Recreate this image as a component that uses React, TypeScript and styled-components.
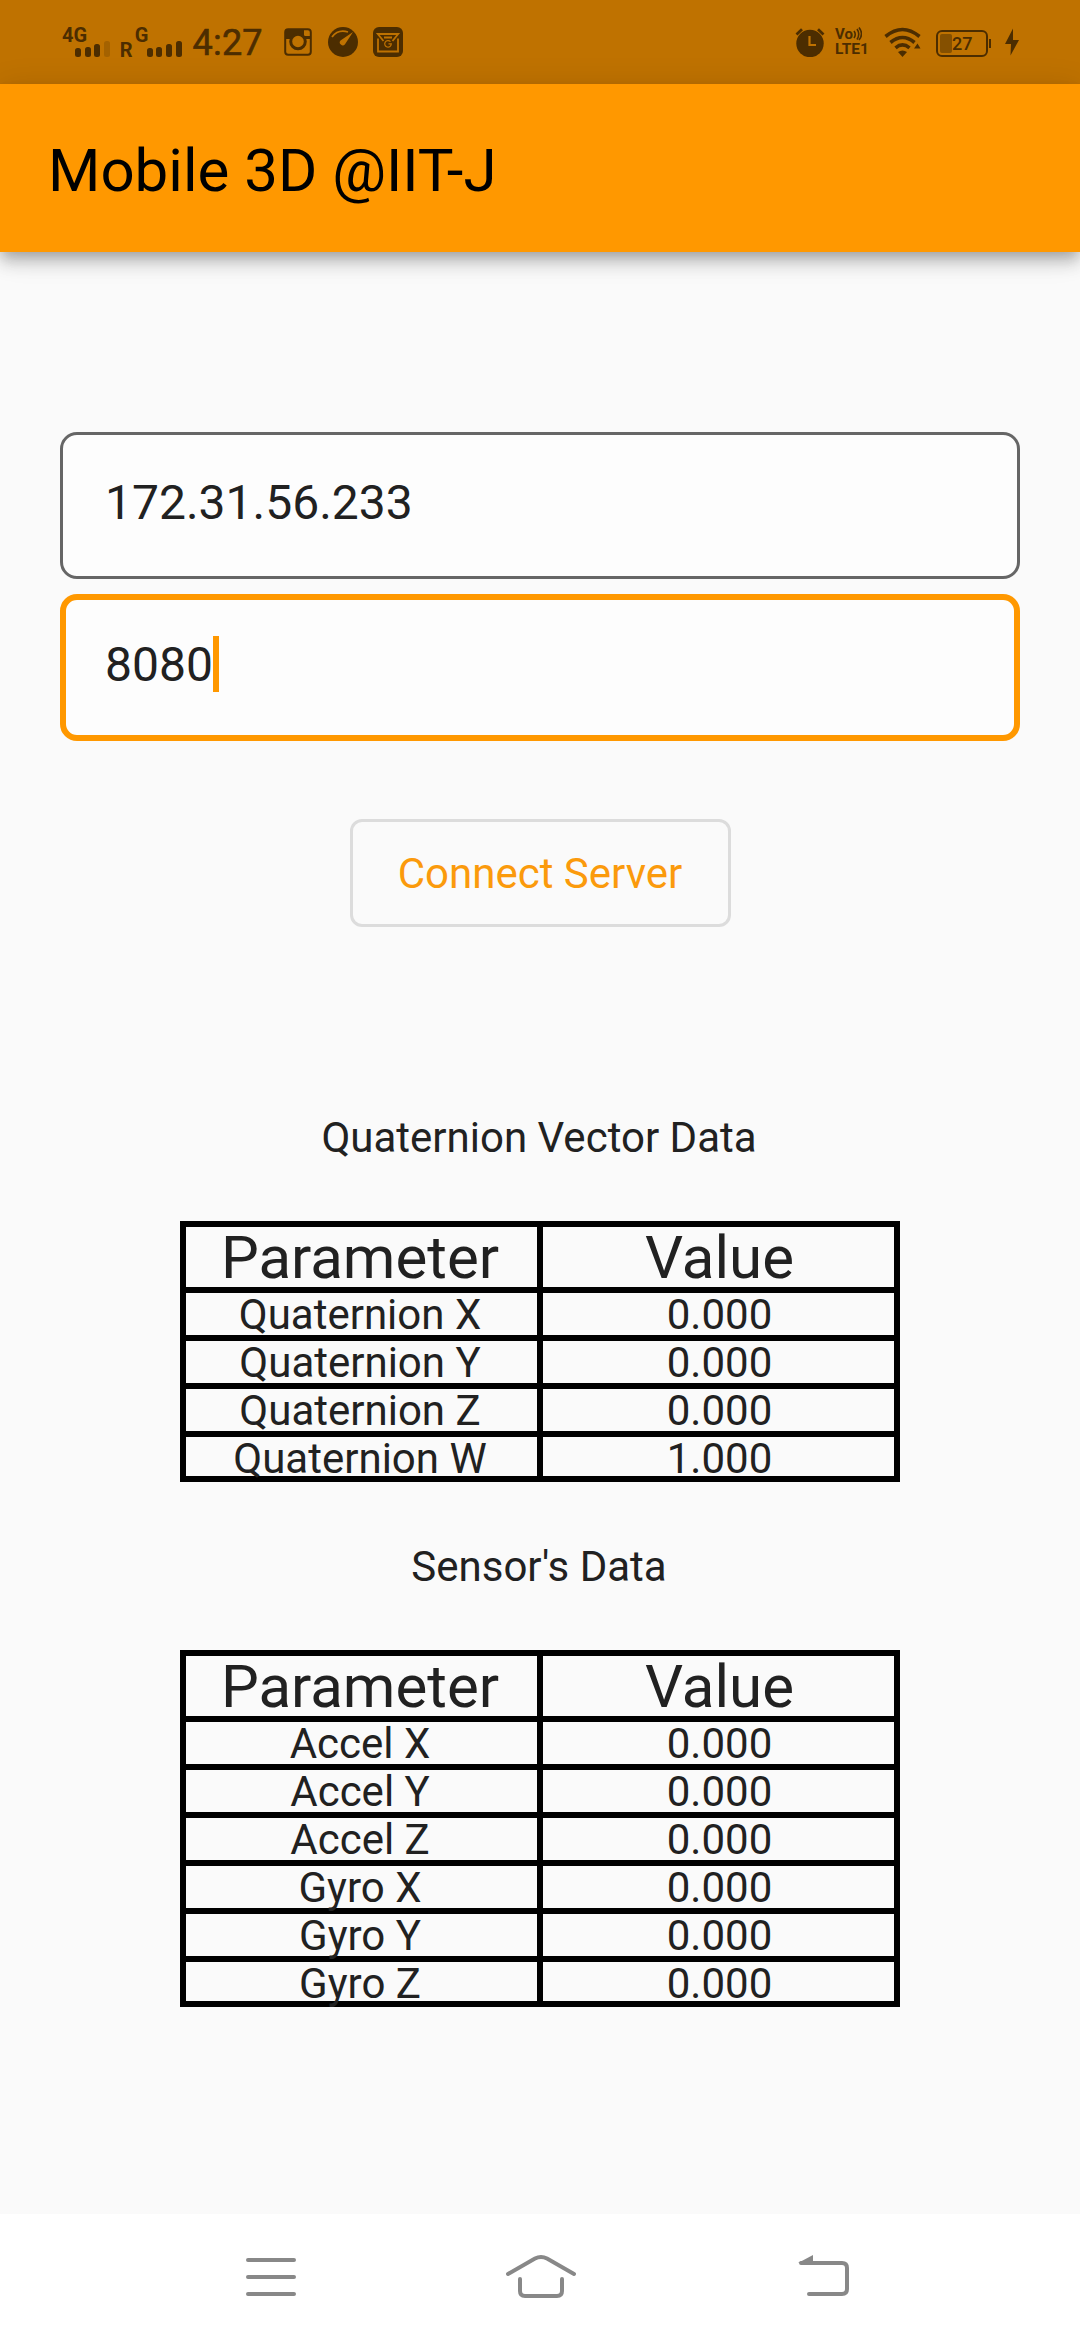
import React from "react";
import styled, { createGlobalStyle } from "styled-components";

const INK = "#4c2d00";
const ACCENT = "#ff9800";

const GlobalStyle = createGlobalStyle`
  * { box-sizing: border-box; }
  body { margin: 0; background: #fafafa; }
`;

const Screen = styled.div`
  display: flex;
  flex-direction: column;
  width: 1080px;
  height: 2340px;
  background: #fafafa;
  color: #212121;
  font-family: Roboto, "Liberation Sans", sans-serif;
  overflow: hidden;
`;

const StatusBar = styled.header`
  display: flex;
  flex: none;
  justify-content: space-between;
  height: 84px;
  padding: 27px 60px 0 62px;
  background: #bf7200;
  color: ${INK};
`;

const StatusGroup = styled.div`
  display: flex;
  align-items: flex-start;
  height: 30px;
`;

const Glyph = styled.svg<{ $ml?: number }>`
  display: block;
  flex: none;
  margin-left: ${(p) => p.$ml ?? 0}px;
`;

const NetLabel = styled.span<{ $ml?: number; $mt?: number; $w: number }>`
  width: ${(p) => p.$w}px;
  margin-left: ${(p) => p.$ml ?? 0}px;
  margin-top: ${(p) => p.$mt ?? 0}px;
  font-size: 20px;
  font-weight: 700;
  line-height: 16px;
  white-space: nowrap;
`;

const Bars = styled.div<{ $ml: number }>`
  display: flex;
  align-items: flex-end;
  gap: 3.6px;
  height: 30px;
  margin-left: ${(p) => p.$ml}px;
`;

const Bar = styled.i<{ $h: number; $off?: boolean }>`
  width: 6px;
  height: ${(p) => p.$h}px;
  border-radius: 2.5px;
  background: ${(p) => (p.$off ? "#a46200" : INK)};
`;

const Clock = styled.time`
  width: 69px;
  margin-left: 11px;
  font-size: 36px;
  font-weight: 400;
  line-height: 33px;
  letter-spacing: 0.2px;
  white-space: nowrap;
  -webkit-text-stroke: 0.6px ${INK};
`;

const Volte = styled.div`
  display: flex;
  flex-direction: column;
  width: 34px;
  margin-left: 10px;
  font-weight: 700;
  font-size: 15.5px;
  line-height: 15px;
`;

const VoLine = styled.div`
  display: flex;
  font-size: 15px;
  height: 15px;
`;

const Battery = styled.div`
  display: flex;
  align-items: center;
  width: 52px;
  height: 27px;
  margin: 3px 0 0 15px;
  padding-left: 2px;
  border: 2.5px solid ${INK};
  border-radius: 6px;
  font-size: 18px;
  font-weight: 500;
  line-height: 20px;
`;

const Charge = styled.i`
  width: 12px;
  height: 19px;
  border-radius: 2px;
  background: #855000;
`;

const BatteryCap = styled.i`
  width: 2px;
  height: 9px;
  margin: 12px 0 0 1px;
  background: ${INK};
`;

const AppBar = styled.div`
  flex: none;
  height: 168px;
  padding: 52px 48px 0;
  background: ${ACCENT};
  box-shadow: 0 6px 12px -3px rgba(0, 0, 0, 0.2), 0 12px 15px rgba(0, 0, 0, 0.14), 0 3px 30px rgba(0, 0, 0, 0.12);
`;

const Title = styled.h1`
  margin: 0;
  color: #000;
  font-size: 60px;
  font-weight: 400;
  line-height: 70px;
`;

const Content = styled.main`
  display: flex;
  flex: 1;
  flex-direction: column;
  align-items: center;
  padding-top: 180px;
`;

const Fields = styled.div`
  display: flex;
  flex-direction: column;
  gap: 15px;
  width: 960px;
`;

const Field = styled.div<{ $focused?: boolean }>`
  display: flex;
  align-items: flex-start;
  height: 147px;
  padding: ${(p) => (p.$focused ? "36px 39px" : "39px 42px")};
  border: ${(p) => (p.$focused ? `6px solid ${ACCENT}` : "3px solid #666")};
  border-radius: 17px;
  background: #fdfdfd;
  font-size: 48px;
  line-height: 58px;
`;

const Caret = styled.i`
  width: 6px;
  height: 56px;
  background: ${ACCENT};
`;

const ConnectButton = styled.button`
  width: 381px;
  height: 108px;
  margin: 78px 0 0;
  padding: 0;
  border: 3px solid #dcdcdc;
  border-radius: 12px;
  background: transparent;
  color: #fb9a0c;
  font-family: inherit;
  font-size: 42px;
  line-height: 49px;
`;

const Heading = styled.h2<{ $mt: number }>`
  margin: ${(p) => p.$mt}px 0 59px;
  padding-right: 2px;
  font-size: 42px;
  font-weight: 400;
  line-height: 49px;
`;

const Table = styled.div<{ $rows: number }>`
  display: grid;
  grid-template-columns: 351px 351px;
  grid-template-rows: 60px repeat(${(p) => p.$rows - 1}, 42px) 39px;
  gap: 6px;
  padding: 6px;
  background: #000;
`;

const Cell = styled.div<{ $head?: boolean }>`
  min-height: 0;
  background: #fafafa;
  font-size: ${(p) => (p.$head ? 60 : 42)}px;
  line-height: ${(p) => (p.$head ? 61 : 43)}px;
  text-align: center;

  &:nth-child(odd) {
    padding-right: 3px;
  }

  &:nth-child(even) {
    padding-left: 2px;
  }
`;

const NavBar = styled.nav`
  display: flex;
  flex: none;
  align-items: flex-start;
  height: 126px;
  padding: 36px 0 0 244px;
  background: #fff;
`;

type Row = [string, string];

const quaternion: Row[] = [
  ["Quaternion X", "0.000"],
  ["Quaternion Y", "0.000"],
  ["Quaternion Z", "0.000"],
  ["Quaternion W", "1.000"],
];

const sensors: Row[] = [
  ["Accel X", "0.000"],
  ["Accel Y", "0.000"],
  ["Accel Z", "0.000"],
  ["Gyro X", "0.000"],
  ["Gyro Y", "0.000"],
  ["Gyro Z", "0.000"],
];

function DataTable({ rows }: { rows: Row[] }) {
  return (
    <Table $rows={rows.length}>
      <Cell $head>Parameter</Cell>
      <Cell $head>Value</Cell>
      {rows.map(([name, value]) => (
        <React.Fragment key={name}>
          <Cell>{name}</Cell>
          <Cell>{value}</Cell>
        </React.Fragment>
      ))}
    </Table>
  );
}

function CameraIcon() {
  return (
    <Glyph $ml={21} width="30" height="30" viewBox="0 0 30 30" fill="none">
      <rect x="2.2" y="2.2" width="25.6" height="25.6" rx="3" stroke={INK} strokeWidth="2" />
      <path d="M2 12V4.500Q2 2 4.500 2H21V9H27V12H22A8 8 0 0 0 8 12Z" fill={INK} />
      <circle cx="15" cy="14.500" r="7.300" stroke={INK} strokeWidth="3" />
    </Glyph>
  );
}

function GaugeIcon() {
  return (
    <Glyph $ml={15} width="30" height="30" viewBox="0 0 30 30" fill="none">
      <circle cx="15" cy="15" r="15" fill={INK} />
      <path d="M4 10Q10 2 20 5" stroke="#bf7200" strokeWidth="1.800" />
      <path d="M25 5L12.500 13.500A2.800 2.800 0 1 0 17 17.200Z" fill="#bf7200" />
    </Glyph>
  );
}

function MailIcon() {
  return (
    <Glyph $ml={15} width="30" height="30" viewBox="0 0 30 30" fill="none">
      <rect width="30" height="30" rx="6" fill={INK} />
      <path
        d="M10.500 14L4.800 7H25.200L19.500 14M5 11.500V24.500H25V11.500M11 10.500H19"
        stroke="#bf7200"
        strokeWidth="1.800"
      />
      <path d="M17.500 14.700A3.300 3.300 0 1 0 18.300 16.800H15.500" stroke="#bf7200" strokeWidth="1.200" />
    </Glyph>
  );
}

function AlarmIcon() {
  return (
    <Glyph width="30" height="30" viewBox="0 0 30 30" fill="none">
      <circle cx="15" cy="16.500" r="13.700" fill={INK} />
      <path d="M1.500 7.500L7 2.300M28.500 7.500L23 2.300" stroke={INK} strokeWidth="2.800" />
      <path d="M14.500 9V18H21" stroke="#bf7200" strokeWidth="2.200" />
    </Glyph>
  );
}

function WifiIcon() {
  return (
    <Glyph $ml={15} width="37" height="30" viewBox="0 0 37 30" fill="none">
      <g stroke={INK} strokeWidth="3.600">
        <path d="M1.500 9.500Q18.500 -4.500 35.500 9.500" />
        <path d="M6.500 15.500Q18.500 5.500 30.500 15.500" />
        <path d="M11.500 20.800Q18.500 15 25.500 20.800" />
      </g>
      <path d="M14 25Q18.500 21.800 23 25L18.500 30Z" fill={INK} />
      <path d="M30 21.500H36.500L33.500 16.500Z" fill={INK} />
    </Glyph>
  );
}

export default function App() {
  return (
    <Screen>
      <GlobalStyle />
      <StatusBar>
        <StatusGroup>
          <NetLabel $w={24}>4G</NetLabel>
          <Bars $ml={-11}>
            <Bar $h={9} />
            <Bar $h={10} />
            <Bar $h={13} />
            <Bar $h={16} $off />
          </Bars>
          <NetLabel $w={12} $ml={10} $mt={15}>R</NetLabel>
          <NetLabel $w={13} $ml={3}>G</NetLabel>
          <Bars $ml={-1}>
            <Bar $h={9} />
            <Bar $h={10} />
            <Bar $h={13} />
            <Bar $h={16} />
          </Bars>
          <Clock>4:27</Clock>
          <CameraIcon />
          <GaugeIcon />
          <MailIcon />
        </StatusGroup>
        <StatusGroup>
          <AlarmIcon />
          <Volte>
            <VoLine>
              Vo
              <svg width="9" height="14" viewBox="0 0 9 14" fill="none" stroke={INK} strokeWidth="1.6">
                <path d="M1 4Q3.500 7.500 1 11M4 2Q7.500 7 4 12.500M6 .5Q11 7 6 13" />
              </svg>
            </VoLine>
            <span>LTE1</span>
          </Volte>
          <WifiIcon />
          <Battery>
            <Charge />
            27
          </Battery>
          <BatteryCap />
          <Glyph $ml={13} width="16" height="30" viewBox="0 0 16 30">
            <path d="M9 1.500L1 17H7L6.500 28.500L15 13H9Z" fill={INK} />
          </Glyph>
        </StatusGroup>
      </StatusBar>

      <AppBar>
        <Title>Mobile 3D @IIT-J</Title>
      </AppBar>

      <Content>
        <Fields>
          <Field>172.31.56.233</Field>
          <Field $focused>
            8080
            <Caret />
          </Field>
        </Fields>
        <ConnectButton>Connect Server</ConnectButton>
        <Heading $mt={186}>Quaternion Vector Data</Heading>
        <DataTable rows={quaternion} />
        <Heading $mt={60}>Sensor's Data</Heading>
        <DataTable rows={sensors} />
      </Content>

      <NavBar>
        <Glyph width="54" height="54" viewBox="0 0 54 54" stroke="#888" strokeWidth="4" strokeLinecap="round">
          <path d="M4 10H50M4 27H50M4 44H50" />
        </Glyph>
        <Glyph $ml={206} width="74" height="54" viewBox="0 0 74 54" fill="none" stroke="#888" strokeWidth="4" strokeLinecap="round">
          <path d="M4 24L31 8.500Q37 5.300 43 8.500L70 24M16 29V41Q16 46 21 46H53Q58 46 58 41V29" />
        </Glyph>
        <Glyph $ml={218} width="54" height="54" viewBox="0 0 54 54" fill="none" stroke="#888" strokeWidth="4" strokeLinecap="round">
          <path d="M5 13H46Q51 13 51 18V39Q51 44 46 44H13" />
          <path d="M2 13L17 5V13Z" fill="#888" stroke="none" />
        </Glyph>
      </NavBar>
    </Screen>
  );
}
